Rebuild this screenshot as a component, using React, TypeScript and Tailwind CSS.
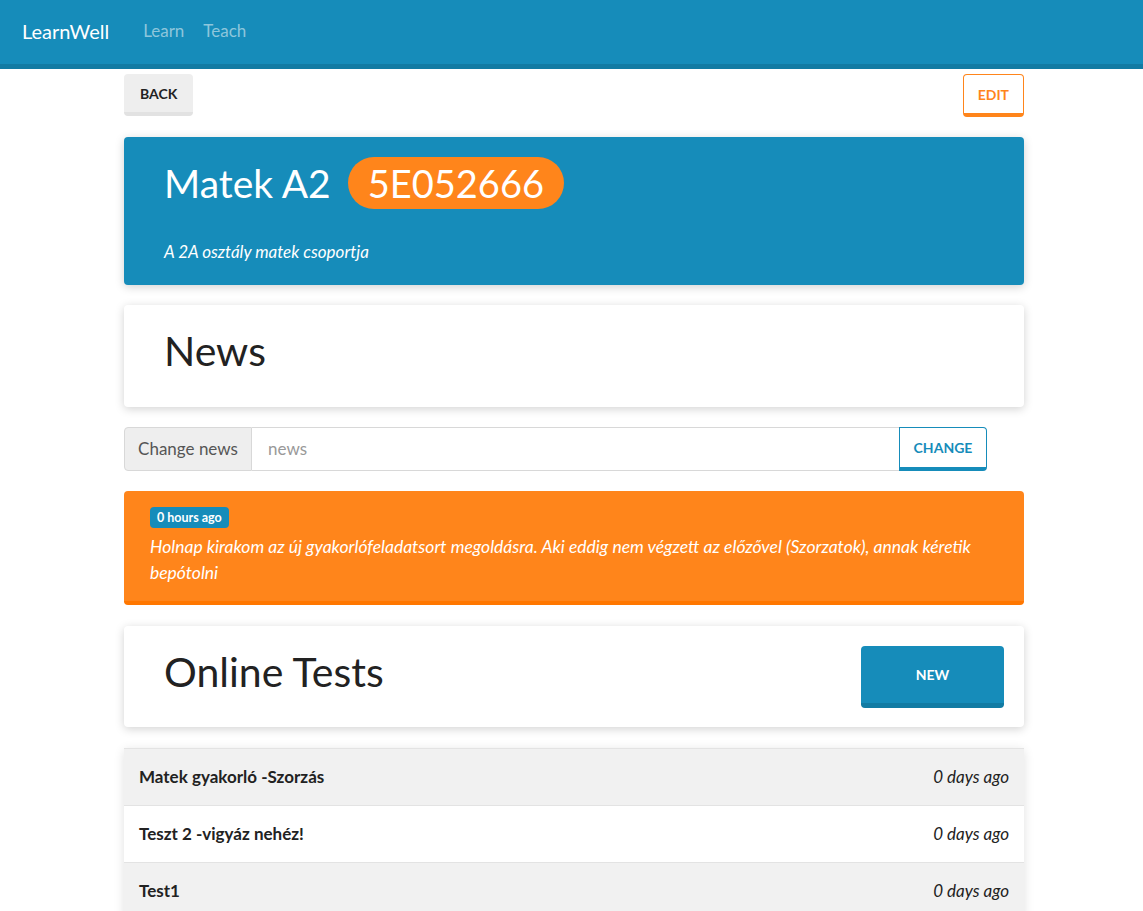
import React from "react";

const font = { fontFamily: "Lato, 'Noto Sans', sans-serif" };

export default function App() {
  const rows = [
    { name: "Matek gyakorló -Szorzás", bg: "bg-[#f1f1f1]" },
    { name: "Teszt 2 -vigyáz nehéz!", bg: "bg-white" },
    { name: "Test1", bg: "bg-[#f1f1f1]" },
  ];
  return (
    <div className="min-h-[911px] bg-white text-[#222]" style={font}>
      <nav className="h-[69px] bg-[#168cba] border-b-[5px] border-[#127ba3] flex items-center px-[22px] pb-[3px]">
        <span className="text-white text-[20px]">LearnWell</span>
        <span className="ml-[34px] text-[17px] text-[#8ec6dc]">Learn</span>
        <span className="ml-[19px] text-[17px] text-[#8ec6dc]">Teach</span>
      </nav>
      <div className="w-[900px] ml-[124px]">
        <div className="flex justify-between mt-[5px]">
          <button className="h-[42px] px-[16px] bg-[#eeeeee] border-b-[4px] border-[#e2e2e2] rounded-[4px] text-[14px] font-bold text-[#222]">
            BACK
          </button>
          <button className="h-[43px] px-[14px] bg-white border border-[#ff851b] border-b-[4px] rounded-[4px] text-[14px] font-bold text-[#ff851b]">
            EDIT
          </button>
        </div>
        <div className="mt-[20px] h-[148px] bg-[#168cba] rounded-[4px] shadow-[0_2px_10px_rgba(0,0,0,0.18)] px-[40px] pt-[20px] text-white">
          <div className="flex items-center">
            <span className="text-[39px] leading-[52px]">Matek A2</span>
            <span className="ml-[17px] h-[52px] px-[20px] rounded-full bg-[#ff851b] text-[38px] leading-[52px]">5E052666</span>
          </div>
          <div className="mt-[30px] italic text-[17px]">A 2A osztály matek csoportja</div>
        </div>
        <div className="mt-[20px] h-[102px] bg-white rounded-[4px] shadow-[0_2px_10px_rgba(0,0,0,0.18)] px-[40px] pb-[10px] flex items-center">
          <span className="text-[41px] text-[#222]">News</span>
        </div>
        <div className="mt-[20px] flex w-[863px] h-[44px]">
          <div className="w-[128px] bg-[#eeeeee] border border-[#d8d8d8] rounded-l-[4px] flex items-center justify-center text-[17px] text-[#555]">
            Change news
          </div>
          <div className="flex-1 border-y border-[#d8d8d8] flex items-center px-[16px] text-[17px] text-[#999]">news</div>
          <button className="w-[88px] bg-white border border-[#168cba] border-b-[4px] rounded-r-[4px] text-[14px] font-bold text-[#168cba]">
            CHANGE
          </button>
        </div>
        <div className="mt-[20px] h-[114px] bg-[#ff851b] border-b-[4px] border-[#ff7700] rounded-[4px] px-[26px] pt-[16px] text-white">
          <div className="flex">
            <span className="h-[21px] bg-[#168cba] rounded-[4px] px-[7px] text-[12.5px] font-bold leading-[21px]">0 hours ago</span>
          </div>
          <p className="italic text-[17.5px] leading-[26px] mt-[6px]">
            Holnap kirakom az új gyakorlófeladatsort megoldásra. Aki eddig nem végzett az előzővel (Szorzatok), annak kéretik bepótolni
          </p>
        </div>
        <div className="mt-[21px] h-[101px] bg-white rounded-[4px] shadow-[0_2px_10px_rgba(0,0,0,0.18)] pl-[40px] pr-[20px] flex items-center justify-between">
          <span className="text-[41px] text-[#222] pb-[10px]">Online Tests</span>
          <button className="w-[143px] h-[62px] bg-[#168cba] border-b-[5px] border-[#127ba3] rounded-[4px] text-[14px] font-bold text-white">
            NEW
          </button>
        </div>
        <div className="mt-[21px] shadow-[0_2px_10px_rgba(0,0,0,0.12)]">
          {rows.map((r) => (
            <div key={r.name} className={`h-[57px] ${r.bg} border-t border-[#e3e3e3] flex items-center justify-between px-[15px]`}>
              <span className="font-bold text-[17px] text-[#222]">{r.name}</span>
              <span className="italic text-[17px] text-[#222]">0 days ago</span>
            </div>
          ))}
        </div>
      </div>
    </div>
  );
}
